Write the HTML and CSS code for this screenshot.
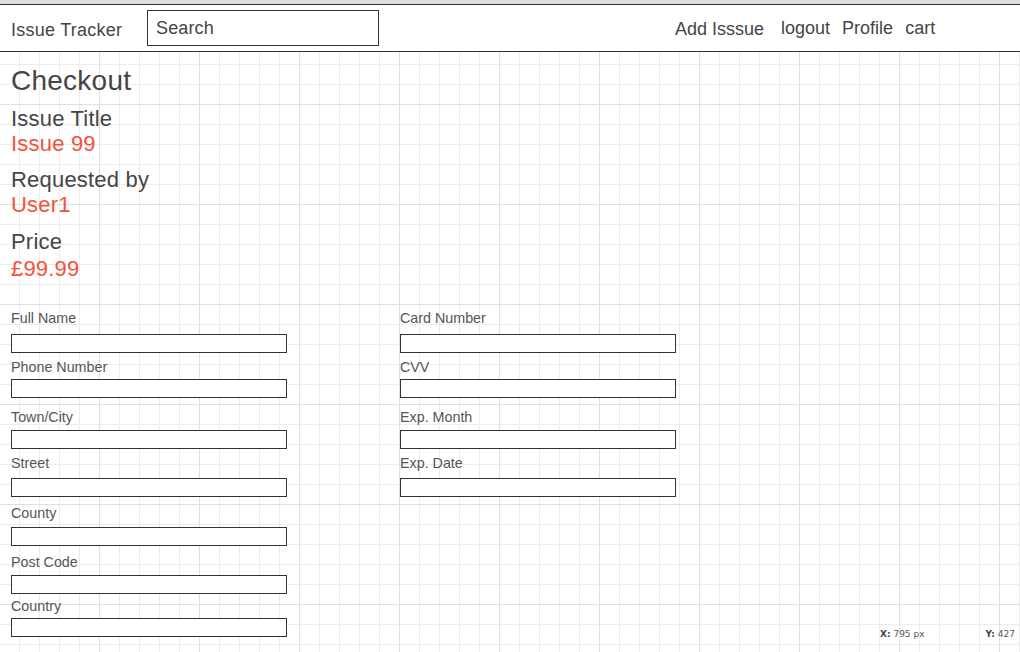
FILE: index.html
```html
<!DOCTYPE html>
<html lang="en">
<head>
<meta charset="utf-8">
<title>Issue Tracker - Checkout</title>
<link rel="stylesheet" href="styles.css">
</head>
<body>
<div class="topbar"></div>
<header class="header">
  <div class="brand">Issue Tracker</div>
  <input class="search" type="text" placeholder="Search">
  <nav class="nav">
    <a class="nav-item nav-add" href="#">Add Isssue</a>
    <a class="nav-item" href="#">logout</a>
    <a class="nav-item" href="#">Profile</a>
    <a class="nav-item" href="#">cart</a>
  </nav>
</header>
<main class="main">
  <h1 class="title">Checkout</h1>
  <div class="info info-first">
    <div class="info-label">Issue Title</div>
    <div class="info-value">Issue 99</div>
  </div>
  <div class="info">
    <div class="info-label">Requested by</div>
    <div class="info-value">User1</div>
  </div>
  <div class="info info-last">
    <div class="info-label">Price</div>
    <div class="info-value info-value-price">£99.99</div>
  </div>

  <form class="form">
    <div class="col">
      <div class="field"><label>Full Name</label><input type="text"></div>
      <div class="field"><label>Phone Number</label><input type="text"></div>
      <div class="field"><label>Town/City</label><input type="text"></div>
      <div class="field"><label>Street</label><input type="text"></div>
      <div class="field"><label>County</label><input type="text"></div>
      <div class="field"><label>Post Code</label><input type="text"></div>
      <div class="field"><label>Country</label><input type="text"></div>
    </div>
    <div class="col">
      <div class="field"><label>Card Number</label><input type="text"></div>
      <div class="field"><label>CVV</label><input type="text"></div>
      <div class="field"><label>Exp. Month</label><input type="text"></div>
      <div class="field"><label>Exp. Date</label><input type="text"></div>
    </div>
  </form>
</main>
<div class="coords"><span><b>X:</b> 795 px</span><span><b>Y:</b> 427</span></div>
</body>
</html>
```
FILE: styles.css
```css
html {
  background-color: #fff;
  background-image:
    linear-gradient(90deg, #e0e0e0 1px, transparent 1px),
    linear-gradient(180deg, #e0e0e0 1px, transparent 1px),
    linear-gradient(90deg, #ededed 1px, transparent 1px),
    linear-gradient(180deg, #ededed 1px, transparent 1px);
  background-size: 100px 100px, 100px 100px, 20px 20px, 20px 20px;
  background-position: 99px 4px, 99px 4px, 19px 4px, 19px 4px;
  min-height: 100%;
}

body {
  margin: 0;
  font-family: "Liberation Sans", Arial, sans-serif;
  color: #454545;
}

.topbar {
  height: 4px;
  background: #dcdcdc;
}

.header {
  display: flex;
  align-items: flex-start;
  height: 46px;
  padding-left: 11px;
  background: #fff;
  border-top: 1px solid #333;
  border-bottom: 1px solid #333;
}

.brand {
  width: 136px;
  margin-top: 15px;
  font-size: 18px;
  line-height: 20px;
  letter-spacing: 0.25px;
  color: #454545;
}

.search {
  box-sizing: border-box;
  width: 232px;
  height: 36px;
  margin: 5px 0 0 0;
  padding: 0 8px;
  border: 1px solid #333;
  border-radius: 0;
  background: #fff;
  font-family: "Liberation Sans", Arial, sans-serif;
  font-size: 18px;
  letter-spacing: 0.15px;
  color: #454545;
  outline: none;
}

.search::placeholder {
  color: #454545;
  opacity: 1;
}

.nav {
  display: flex;
  gap: 12px;
  margin-left: 296px;
  margin-top: 14px;
}

.nav-item {
  font-size: 18px;
  line-height: 20px;
  color: #454545;
  text-decoration: none;
}

.nav-add {
  margin-right: 5px;
}

.nav-item + .nav-item {
  margin-top: -1px;
}

.main {
  padding: 11px 0 0 11px;
}

.title {
  margin: 0;
  font-size: 28px;
  font-weight: normal;
  line-height: 36px;
  letter-spacing: 0.25px;
  color: #454545;
}

.info {
  margin-top: 11px;
  font-size: 22px;
  line-height: 25px;
  letter-spacing: 0.2px;
}

.info-first {
  margin-top: 7px;
}

.info-last {
  margin-top: 12px;
}

.info-label {
  color: #454545;
}

.info-value {
  color: #f4523b;
}

.info-value-price {
  line-height: 29px;
}

.form {
  display: flex;
  gap: 113px;
  margin-top: 27px;
}

.col {
  display: flex;
  flex-direction: column;
  width: 276px;
}

.field label {
  display: block;
  height: 16px;
  font-size: 14.3px;
  line-height: 16px;
  color: #555;
}

.field input {
  display: block;
  box-sizing: border-box;
  width: 276px;
  height: 19px;
  margin: 0;
  padding: 0 3px;
  border: 1px solid #333;
  border-radius: 0;
  background: #fff;
  font-family: "Liberation Sans", Arial, sans-serif;
  font-size: 13px;
  outline: none;
}

.field:nth-child(1) input { margin-top: 8px; }
.field:nth-child(2) { margin-top: 6px; }
.field:nth-child(2) input { margin-top: 4px; }
.field:nth-child(3) { margin-top: 11px; }
.field:nth-child(3) input { margin-top: 5px; }
.field:nth-child(4) { margin-top: 6px; }
.field:nth-child(4) input { margin-top: 7px; }
.field:nth-child(5) { margin-top: 8px; }
.field:nth-child(5) input { margin-top: 6px; }
.field:nth-child(6) { margin-top: 8px; }
.field:nth-child(6) input { margin-top: 5px; }
.field:nth-child(7) { margin-top: 4px; }
.field:nth-child(7) input { margin-top: 4px; }

.coords {
  position: absolute;
  left: 880px;
  top: 628px;
  display: flex;
  gap: 61px;
  font-family: "DejaVu Sans", Verdana, sans-serif;
  font-size: 9px;
  line-height: 12px;
  color: #555;
  white-space: nowrap;
}

.coords b {
  color: #444;
}
```
